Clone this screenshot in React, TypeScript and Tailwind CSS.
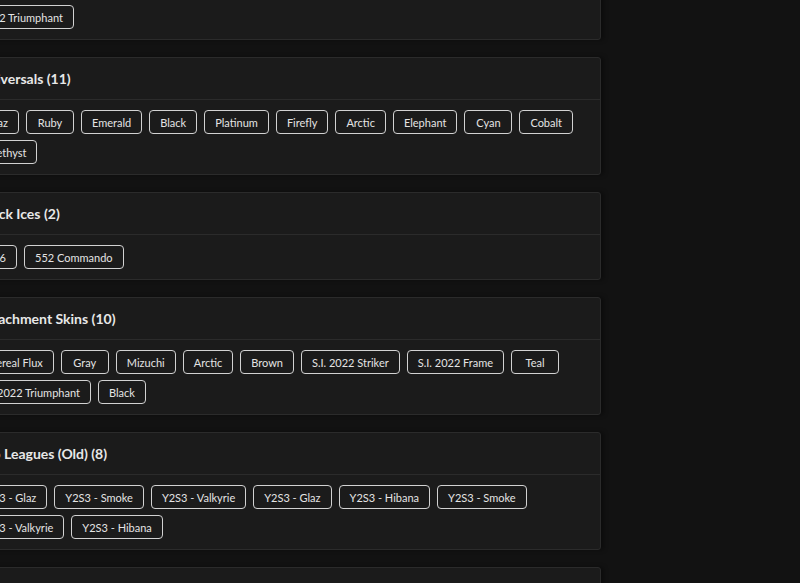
type Section = {
  title: string;
  tags: string[];
};

const sections: Section[] = [
  {
    title: 'Six Invitational 2022',
    tags: ['S.I. 2022 Striker', 'S.I. 2022 Frame', 'S.I. 2022 Charm', 'S.I. 2022 Headgear', 'S.I. 2022 Uniform', '2022 Triumphant'],
  },
  {
    title: 'Universals',
    tags: ['Topaz', 'Ruby', 'Emerald', 'Black', 'Platinum', 'Firefly', 'Arctic', 'Elephant', 'Cyan', 'Cobalt', 'Amethyst'],
  },
  {
    title: 'Black Ices',
    tags: ['P226', '552 Commando'],
  },
  {
    title: 'Attachment Skins',
    tags: [
      'Ethereal Flux',
      'Gray',
      'Mizuchi',
      'Arctic',
      'Brown',
      'S.I. 2022 Striker',
      'S.I. 2022 Frame',
      'Teal',
      'S.I. 2022 Triumphant',
      'Black',
    ],
  },
  {
    title: 'Pro Leagues (Old)',
    tags: [
      'Y2S3 - Glaz',
      'Y2S3 - Smoke',
      'Y2S3 - Valkyrie',
      'Y2S3 - Glaz',
      'Y2S3 - Hibana',
      'Y2S3 - Smoke',
      'Y2S3 - Valkyrie',
      'Y2S3 - Hibana',
    ],
  },
  {
    title: 'Seasonal',
    tags: ['Doktor\u2019s Curse', 'Road to S.I.', 'Showdown'],
  },
];

function SkinSection({ section }: { section: Section }) {
  return (
    <section className="rounded-[3px] border border-[#2b2b2b] bg-[#1b1b1b] shadow-[3px_0_4px_rgba(0,0,0,0.35)]">
      {/* header */}
      <div className="flex h-[42px] items-center border-b border-[#2b2b2b] px-[22px]">
        <h2 className="text-[14px] font-bold text-[#e8e8e8]">
          {section.title} ({section.tags.length})
        </h2>
      </div>

      {/* tag list */}
      <div className="flex flex-wrap gap-x-[7px] gap-y-[6px] py-[10px] pl-3 pr-4">
        {section.tags.map((tag, i) => (
          <span
            key={i}
            className="flex h-[24px] min-w-[48px] items-center justify-center rounded-[4px] border border-[#d2d2d2] px-[10px] text-[11px] leading-none text-[#e4e4e4]"
          >
            {tag}
          </span>
        ))}
      </div>
    </section>
  );
}

export default function App() {
  return (
    <div className="h-screen overflow-hidden bg-[#121212] font-['Lato',sans-serif]">
      <div className="-mt-[78px] -ml-[44px] flex w-[645px] flex-col gap-[17px]">
        {sections.map((s) => (
          <SkinSection key={s.title} section={s} />
        ))}
      </div>
    </div>
  );
}
